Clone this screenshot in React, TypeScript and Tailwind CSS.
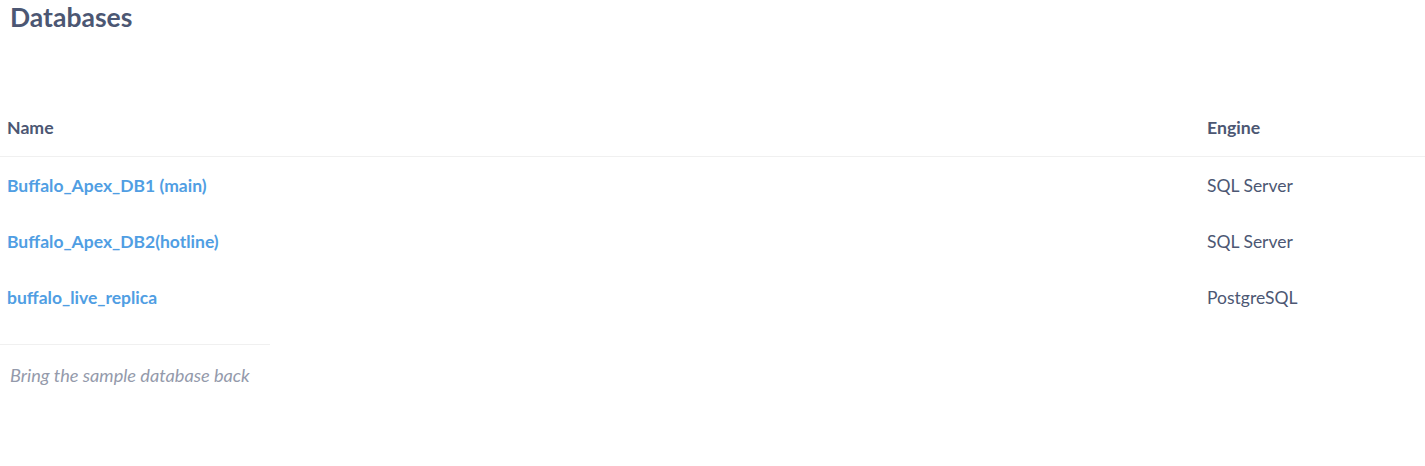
const databases: Array<{ name: string; engine: string }> = [
  { name: "Buffalo_Apex_DB1 (main)", engine: "SQL Server" },
  { name: "Buffalo_Apex_DB2(hotline)", engine: "SQL Server" },
  { name: "buffalo_live_replica", engine: "PostgreSQL" },
];

export default function App() {
  return (
    <div className="min-h-[466px] bg-white font-['Lato','Noto_Sans',sans-serif] text-[#4c5773]">
      <h2 className="px-[10px] text-[26.5px] font-bold leading-[34px] text-[#4c5773]">
        Databases
      </h2>

      <div className="mt-[67px]">
        <div className="grid h-[56px] grid-cols-[1200px_1fr] items-center border-b border-[#f0f0f0] text-[17.7px] font-bold">
          <div className="px-[7px]">Name</div>
          <div className="px-[7px]">Engine</div>
        </div>
        {databases.map((db) => (
          <div
            key={db.name}
            className="grid h-[56px] grid-cols-[1200px_1fr] items-center pt-[2px] text-[17.5px]"
          >
            <div className="px-[7px]">
              <a href="#" className="font-bold text-[#509ee3]">
                {db.name}
              </a>
            </div>
            <div className="px-[7px]">{db.engine}</div>
          </div>
        ))}
      </div>

      <div className="mt-[19px] w-[270px] border-t border-[#f0f0f0] pt-[19px]">
        <a href="#" className="block px-[10px] text-[18.2px] italic leading-[22px] text-[#949aab]">
          Bring the sample database back
        </a>
      </div>
    </div>
  );
}
